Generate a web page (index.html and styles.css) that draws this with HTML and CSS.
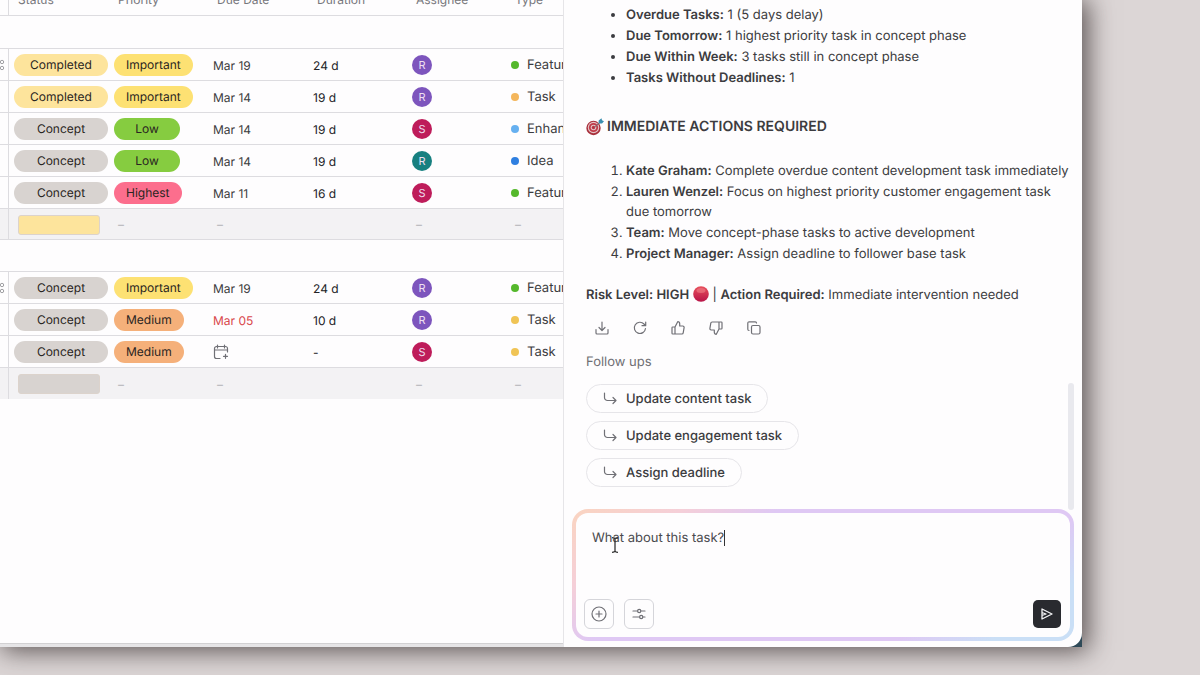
FILE: index.html
```html
<!DOCTYPE html>
<html lang="en">
<head>
  <meta charset="UTF-8">
  <meta name="viewport" content="width=device-width, initial-scale=1.0">
  <title>Task Board Assistant</title>
  <link rel="stylesheet" href="styles.css">
</head>
<body>

  <div class="window-frame">
    <div class="window">

      <div class="table-panel">
        <table class="task-table">
          <colgroup>
            <col class="col-handle">
            <col class="col-wide">
            <col class="col-narrow">
            <col class="col-wide">
            <col class="col-narrow">
            <col class="col-narrow">
            <col class="col-type">
          </colgroup>
          <thead>
            <tr>
              <th></th>
              <th>Status</th>
              <th>Priority</th>
              <th>Due Date</th>
              <th>Duration</th>
              <th>Assignee</th>
              <th>Type</th>
            </tr>
          </thead>

          <!-- First group -->
          <tbody>
            <tr class="group-row"><td colspan="7"></td></tr>
            <tr>
              <td><svg class="handle" width="5" height="12" viewBox="0 0 5 12"><circle cx="2" cy="3" r="1.700"/><circle cx="2" cy="9" r="1.700"/></svg></td>
              <td><span class="pill status completed">Completed</span></td>
              <td><span class="pill important">Important</span></td>
              <td>Mar 19</td>
              <td class="duration">24 d</td>
              <td><span class="avatar purple">R</span></td>
              <td><span class="type"><i class="dot green"></i>Feature</span></td>
            </tr>
            <tr>
              <td></td>
              <td><span class="pill status completed">Completed</span></td>
              <td><span class="pill important">Important</span></td>
              <td>Mar 14</td>
              <td class="duration">19 d</td>
              <td><span class="avatar purple">R</span></td>
              <td><span class="type"><i class="dot orange"></i>Task</span></td>
            </tr>
            <tr>
              <td></td>
              <td><span class="pill status concept">Concept</span></td>
              <td><span class="pill low">Low</span></td>
              <td>Mar 14</td>
              <td class="duration">19 d</td>
              <td><span class="avatar crimson">S</span></td>
              <td><span class="type"><i class="dot sky"></i>Enhancement</span></td>
            </tr>
            <tr>
              <td></td>
              <td><span class="pill status concept">Concept</span></td>
              <td><span class="pill low">Low</span></td>
              <td>Mar 14</td>
              <td class="duration">19 d</td>
              <td><span class="avatar teal">R</span></td>
              <td><span class="type"><i class="dot blue"></i>Idea</span></td>
            </tr>
            <tr>
              <td></td>
              <td><span class="pill status concept">Concept</span></td>
              <td><span class="pill highest">Highest</span></td>
              <td>Mar 11</td>
              <td class="duration">16 d</td>
              <td><span class="avatar crimson">S</span></td>
              <td><span class="type"><i class="dot green"></i>Feature</span></td>
            </tr>
            <tr class="summary-row">
              <td></td>
              <td><span class="summary-bar completed"></span></td>
              <td>–</td>
              <td>–</td>
              <td></td>
              <td>–</td>
              <td>–</td>
            </tr>
          </tbody>

          <!-- Second group -->
          <tbody>
            <tr class="group-row"><td colspan="7"></td></tr>
            <tr>
              <td><svg class="handle" width="5" height="12" viewBox="0 0 5 12"><circle cx="2" cy="3" r="1.700"/><circle cx="2" cy="9" r="1.700"/></svg></td>
              <td><span class="pill status concept">Concept</span></td>
              <td><span class="pill important">Important</span></td>
              <td>Mar 19</td>
              <td class="duration">24 d</td>
              <td><span class="avatar purple">R</span></td>
              <td><span class="type"><i class="dot green"></i>Feature</span></td>
            </tr>
            <tr>
              <td></td>
              <td><span class="pill status concept">Concept</span></td>
              <td><span class="pill medium">Medium</span></td>
              <td class="overdue">Mar 05</td>
              <td class="duration">10 d</td>
              <td><span class="avatar purple">R</span></td>
              <td><span class="type"><i class="dot yellow"></i>Task</span></td>
            </tr>
            <tr>
              <td></td>
              <td><span class="pill status concept">Concept</span></td>
              <td><span class="pill medium">Medium</span></td>
              <td>
                <svg class="icon" width="16" height="16" viewBox="0 0 16 16">
                  <path d="M14.500 8V4.500a2 2 0 0 0-2-2h-9a2 2 0 0 0-2 2v8a2 2 0 0 0 2 2H7M1.500 6h13M4.500 1v3M11.500 1v3M12.500 10.300v4M10.500 12.300h4"/>
                </svg>
              </td>
              <td class="duration">-</td>
              <td><span class="avatar crimson">S</span></td>
              <td><span class="type"><i class="dot yellow"></i>Task</span></td>
            </tr>
            <tr class="summary-row">
              <td></td>
              <td><span class="summary-bar concept"></span></td>
              <td>–</td>
              <td>–</td>
              <td></td>
              <td>–</td>
              <td>–</td>
            </tr>
          </tbody>
        </table>
        <div class="bottom-track"></div>
      </div>

      <div class="chat-panel">
        <div class="messages">
          <ul>
            <li><strong>Overdue Tasks:</strong> 1 (5 days delay)</li>
            <li><strong>Due Tomorrow:</strong> 1 highest priority task in concept phase</li>
            <li><strong>Due Within Week:</strong> 3 tasks still in concept phase</li>
            <li><strong>Tasks Without Deadlines:</strong> 1</li>
          </ul>

          <h3>
            <svg class="emoji" width="18" height="18" viewBox="0 0 18 18">
              <circle cx="7.500" cy="10" r="7.200" fill="#a8303c"/>
              <circle cx="7.500" cy="9.500" r="5.700" fill="#e3c4c6"/>
              <circle cx="7.500" cy="9.500" r="4.600" fill="#c03a48"/>
              <circle cx="7.500" cy="9.500" r="2.800" fill="#e3c4c6"/>
              <circle cx="7.500" cy="9.500" r="1.700" fill="#b9323f"/>
              <path d="M8 9.500l6-5" stroke="#7a6a70" stroke-width="1"/>
              <path d="M12.500 5.500l.2-3L15.500.2l.5 2 2 1-2 2.300z" fill="#3a8fb0"/>
            </svg>
            IMMEDIATE ACTIONS REQUIRED
          </h3>

          <ol>
            <li><strong>Kate Graham:</strong> Complete overdue content development task immediately</li>
            <li><strong>Lauren Wenzel:</strong> Focus on highest priority customer engagement task<br>due tomorrow</li>
            <li><strong>Team:</strong> Move concept-phase tasks to active development</li>
            <li><strong>Project Manager:</strong> Assign deadline to follower base task</li>
          </ol>

          <p class="risk">
            <strong>Risk Level: HIGH</strong>
            <svg class="emoji" width="16" height="16" viewBox="0 0 16 16">
              <defs>
                <linearGradient id="ball" x1="0" y1="0" x2="0" y2="1">
                  <stop offset="0" stop-color="#e8505c"/>
                  <stop offset="1" stop-color="#b81448"/>
                </linearGradient>
              </defs>
              <circle cx="8" cy="8" r="7.800" fill="url(#ball)"/>
              <ellipse cx="8" cy="4.500" rx="4.500" ry="2.500" fill="#f08088" opacity=".6"/>
            </svg>
            | <strong>Action Required:</strong> Immediate intervention needed
          </p>

          <div class="message-actions">
            <button aria-label="Download">
              <svg class="icon" width="16" height="16" viewBox="0 0 16 16"><path d="M8 2v8M5 7.500l3 3 3-3M2 9.500V13a1 1 0 0 0 1 1h10a1 1 0 0 0 1-1V9.500"/></svg>
            </button>
            <button aria-label="Regenerate">
              <svg class="icon" width="16" height="16" viewBox="0 0 16 16"><path d="M13.500 8.500A5.600 5.600 0 1 1 12 4l1.500 1.500M13.700 2v3.700H10"/></svg>
            </button>
            <button aria-label="Like">
              <svg class="icon" width="16" height="16" viewBox="0 0 16 16"><path d="M5 7L7.700 1.700c1.200 0 2 .9 2 2V6h3.100c.9 0 1.500.8 1.300 1.700l-.9 5.200c-.1.700-.7 1.100-1.300 1.100H5zM5 7H2.700c-.4 0-.7.3-.7.700v5.600c0 .4.300.7.700.7H5"/></svg>
            </button>
            <button aria-label="Dislike">
              <svg class="icon" width="16" height="16" viewBox="0 0 16 16"><path d="M11 9l-2.700 5.300c-1.200 0-2-.9-2-2V10H3.200c-.9 0-1.500-.8-1.300-1.700l.9-5.200C2.900 2.400 3.500 2 4.100 2H11zM11 9h2.300c.4 0 .7-.3.700-.7V2.700c0-.4-.3-.7-.7-.7H11"/></svg>
            </button>
            <button aria-label="Copy">
              <svg class="icon" width="16" height="16" viewBox="0 0 16 16"><rect x="5.500" y="5.500" width="8.500" height="8.500" rx="1.500"/><path d="M3 10.500c-.7 0-1.200-.5-1.200-1.200V3.200c0-.8.6-1.400 1.400-1.400h6.100c.7 0 1.200.5 1.200 1.200"/></svg>
            </button>
          </div>

          <h4>Follow ups</h4>
          <div class="follow-ups">
            <button class="chip">
              <svg class="icon" width="14" height="14" viewBox="0 0 14 14"><path d="M1.500 1v4.500a3 3 0 0 0 3 3H13M10 5.500l3 3-3 3"/></svg>
              Update content task
            </button>
            <button class="chip">
              <svg class="icon" width="14" height="14" viewBox="0 0 14 14"><path d="M1.500 1v4.500a3 3 0 0 0 3 3H13M10 5.500l3 3-3 3"/></svg>
              Update engagement task
            </button>
            <button class="chip">
              <svg class="icon" width="14" height="14" viewBox="0 0 14 14"><path d="M1.500 1v4.500a3 3 0 0 0 3 3H13M10 5.500l3 3-3 3"/></svg>
              Assign deadline
            </button>
          </div>
          <div class="scroll-thumb"></div>
        </div>

        <div class="composer">
          <textarea aria-label="Message">What about this task?</textarea>
          <span class="caret"></span>
          <svg class="text-cursor" width="8" height="16" viewBox="0 0 8 16"><path d="M1 .7c1.700 0 3 .5 3 1.500 0-1 1.300-1.500 3-1.500M4 2v12M1 15.300c1.700 0 3-.5 3-1.500 0 1 1.300 1.500 3 1.500"/></svg>
          <div class="composer-actions">
            <button class="tool" aria-label="Add">
              <svg class="icon" width="16" height="16" viewBox="0 0 16 16"><circle cx="8" cy="8" r="7"/><path d="M8 5v6M5 8h6"/></svg>
            </button>
            <button class="tool" aria-label="Settings">
              <svg class="icon" width="14" height="14" viewBox="0 0 14 14"><path d="M1 4h4.500M9 4h4M1 10h6.500M11 10h2"/><circle cx="7.200" cy="4" r="1.600"/><circle cx="9.200" cy="10" r="1.600"/></svg>
            </button>
            <button class="send" aria-label="Send">
              <svg width="14" height="14" viewBox="0 0 14 14"><path d="M2 2l10 5-10 5zM2 5.500l4 1.500-4 1.500"/></svg>
            </button>
          </div>
        </div>
      </div>

    </div>
  </div>

</body>
</html>
```
FILE: styles.css
```css
* {
  box-sizing: border-box;
}

body {
  margin: 0;
  height: 100vh;
  padding: 0 118px 28px 0;
  background-color: #dcd6d6;
  font-family: Inter, 'Liberation Sans', sans-serif;
  font-size: 13px;
  text-rendering: geometricPrecision;
  color: #3c3c40;
  overflow: hidden;
}

button {
  padding: 0;
  border: none;
  background: none;
  font: inherit;
  color: inherit;
  text-rendering: inherit;
  cursor: pointer;
}

.icon {
  fill: none;
  stroke: #707076;
  stroke-width: 1.2;
  stroke-linecap: round;
  stroke-linejoin: round;
}

.window-frame {
  height: 100%;
  background-color: #2f4a58;
  box-shadow: 4px 2px 24px 2px rgba(50, 40, 40, 0.75);
}

.window {
  display: flex;
  height: 100%;
  background-color: #fefdfe;
  border-radius: 0 0 14px 0;
  overflow: hidden;
}

/* Task table */
.table-panel {
  flex: 1;
  min-width: 0;
  display: flex;
  flex-direction: column;
  overflow: hidden;
}

.task-table {
  width: 100%;
  margin-top: -17px;
  table-layout: fixed;
  border-collapse: separate;
  border-spacing: 0;
  font-size: 12px;
}

.col-handle {
  width: 9px;
}

.col-wide {
  width: 100px;
}

.col-narrow {
  width: 99px;
}

th, td {
  height: 32px;
  padding: 1px 0 0 5px;
  border-bottom: 1px solid #dddce0;
  text-align: left;
  white-space: nowrap;
  overflow: hidden;
}

th {
  height: 33px;
  padding: 0 0 0 9px;
  font-weight: 400;
  color: #77777c;
}

.group-row td {
  height: 33px;
}

tbody:last-child .group-row td {
  height: 32px;
}

th:first-child,
td:first-child {
  padding: 0;
  border-right: 1px solid #dddce0;
}

.group-row td:first-child {
  border-right: none;
}

.duration {
  color: #222226;
}

.overdue {
  color: #d9484c;
}

.handle {
  fill: none;
  stroke: #a0a0a4;
}

.pill {
  display: block;
  width: fit-content;
  height: 22px;
  min-width: 66px;
  padding: 0 12px;
  border-radius: 11px;
  line-height: 22px;
  text-align: center;
  color: #2a2522;
}

.status {
  width: 94px;
}

.completed {
  background-color: #fde49c;
}

.concept {
  background-color: #d8d3d0;
}

.important {
  background-color: #fde173;
}

.low {
  background-color: #86cc40;
}

.highest {
  background-color: #fc6e8d;
}

.medium {
  background-color: #f5b07a;
}

.avatar {
  display: block;
  width: 20px;
  height: 20px;
  border-radius: 50%;
  font-size: 11px;
  line-height: 20px;
  text-align: center;
  color: #eedff0;
}

.purple {
  background-color: #7d55bd;
}

.crimson {
  background-color: #be1c5a;
}

.teal {
  background-color: #178080;
}

.type {
  display: flex;
  align-items: center;
  gap: 8px;
  font-size: 13px;
}

.dot {
  flex: none;
  width: 8px;
  height: 8px;
  border-radius: 50%;
}

.green {
  background-color: #55b82c;
}

.orange {
  background-color: #f4b65c;
}

.yellow {
  background-color: #f0c455;
}

.sky {
  background-color: #66b0f0;
}

.blue {
  background-color: #2f7fe0;
}

td svg {
  display: block;
}

.summary-row td {
  height: 31px;
  padding-left: 9px;
  background-color: #f3f2f4;
  color: #b4b4b8;
}

tbody:last-child .summary-row td {
  border-bottom: none;
}

.summary-bar {
  display: block;
  width: 82px;
  height: 20px;
  border: 1px solid #dcd3cc;
  border-radius: 3px;
}

.bottom-track {
  height: 4px;
  margin-top: auto;
  border-top: 1px solid #d2d1d3;
  background-color: #e6e5e7;
}

/* Assistant panel */
.chat-panel {
  flex: none;
  width: 519px;
  display: flex;
  flex-direction: column;
  padding: 0 8px 6px;
  border-left: 1px solid #e6e5e8;
}

.messages {
  position: relative;
  flex: 1;
  padding: 5px 0 0 14px;
  line-height: 20px;
}

.messages ul,
.messages ol {
  margin: 0;
  padding-left: 40px;
}

.messages li {
  margin-bottom: 1px;
}

.messages strong,
.messages h3 {
  font-weight: 600;
}

.messages h3 {
  display: flex;
  align-items: center;
  gap: 3px;
  margin: 29px 0 24px;
  font-size: 14px;
}

.risk {
  margin: 21px 0 7px;
}

.risk .emoji {
  vertical-align: -3px;
}

.message-actions {
  display: flex;
  gap: 6px;
}

.message-actions button {
  display: flex;
  align-items: center;
  justify-content: center;
  width: 32px;
  height: 32px;
}

.messages h4 {
  margin: 8px 0 12px;
  font-weight: 400;
  color: #707075;
}

.follow-ups {
  display: flex;
  flex-direction: column;
  align-items: flex-start;
  gap: 8px;
}

.chip {
  display: flex;
  align-items: center;
  gap: 9px;
  height: 29px;
  padding: 0 16px;
  border: 1px solid #e6e5e9;
  border-radius: 15px;
  font-weight: 500;
}

.scroll-thumb {
  position: absolute;
  right: 0;
  bottom: -1px;
  width: 6px;
  height: 127px;
  border-radius: 3px;
  background-color: #e9e9ee;
}

.composer {
  position: relative;
  display: flex;
  flex-direction: column;
  height: 132px;
  padding: 12px 9px 8px 8px;
  border: 4px solid transparent;
  border-radius: 16px;
  background: linear-gradient(#fefdfe, #fefdfe) padding-box,
    linear-gradient(145deg, #fad4c0, #f5cfd8 16%, #dfc8f4 30%, #dfc8f4 74%, #cadff6 88%) border-box;
}

.composer textarea {
  flex: 1;
  padding: 3px 8px;
  border: none;
  outline: none;
  background: none;
  resize: none;
  font: inherit;
  line-height: 20px;
  text-rendering: inherit;
  color: #4a4a4e;
}

.caret {
  position: absolute;
  top: 17px;
  left: 148px;
  width: 1px;
  height: 16px;
  background-color: #333;
}

.text-cursor {
  position: absolute;
  top: 24px;
  left: 35px;
  fill: none;
  stroke: #333;
  stroke-width: 1.3;
}

.composer-actions {
  display: flex;
  align-items: center;
  gap: 10px;
}

.tool,
.send {
  display: flex;
  align-items: center;
  justify-content: center;
  width: 30px;
  height: 30px;
  border: 1px solid #d5d5da;
  border-radius: 6px;
}

.send {
  width: 28px;
  height: 28px;
  margin-left: auto;
  border: none;
  border-radius: 5px;
  background-color: #292a2f;
}

.send svg {
  fill: none;
  stroke: #f4f4f6;
  stroke-width: 1.3;
  stroke-linejoin: round;
}
```
